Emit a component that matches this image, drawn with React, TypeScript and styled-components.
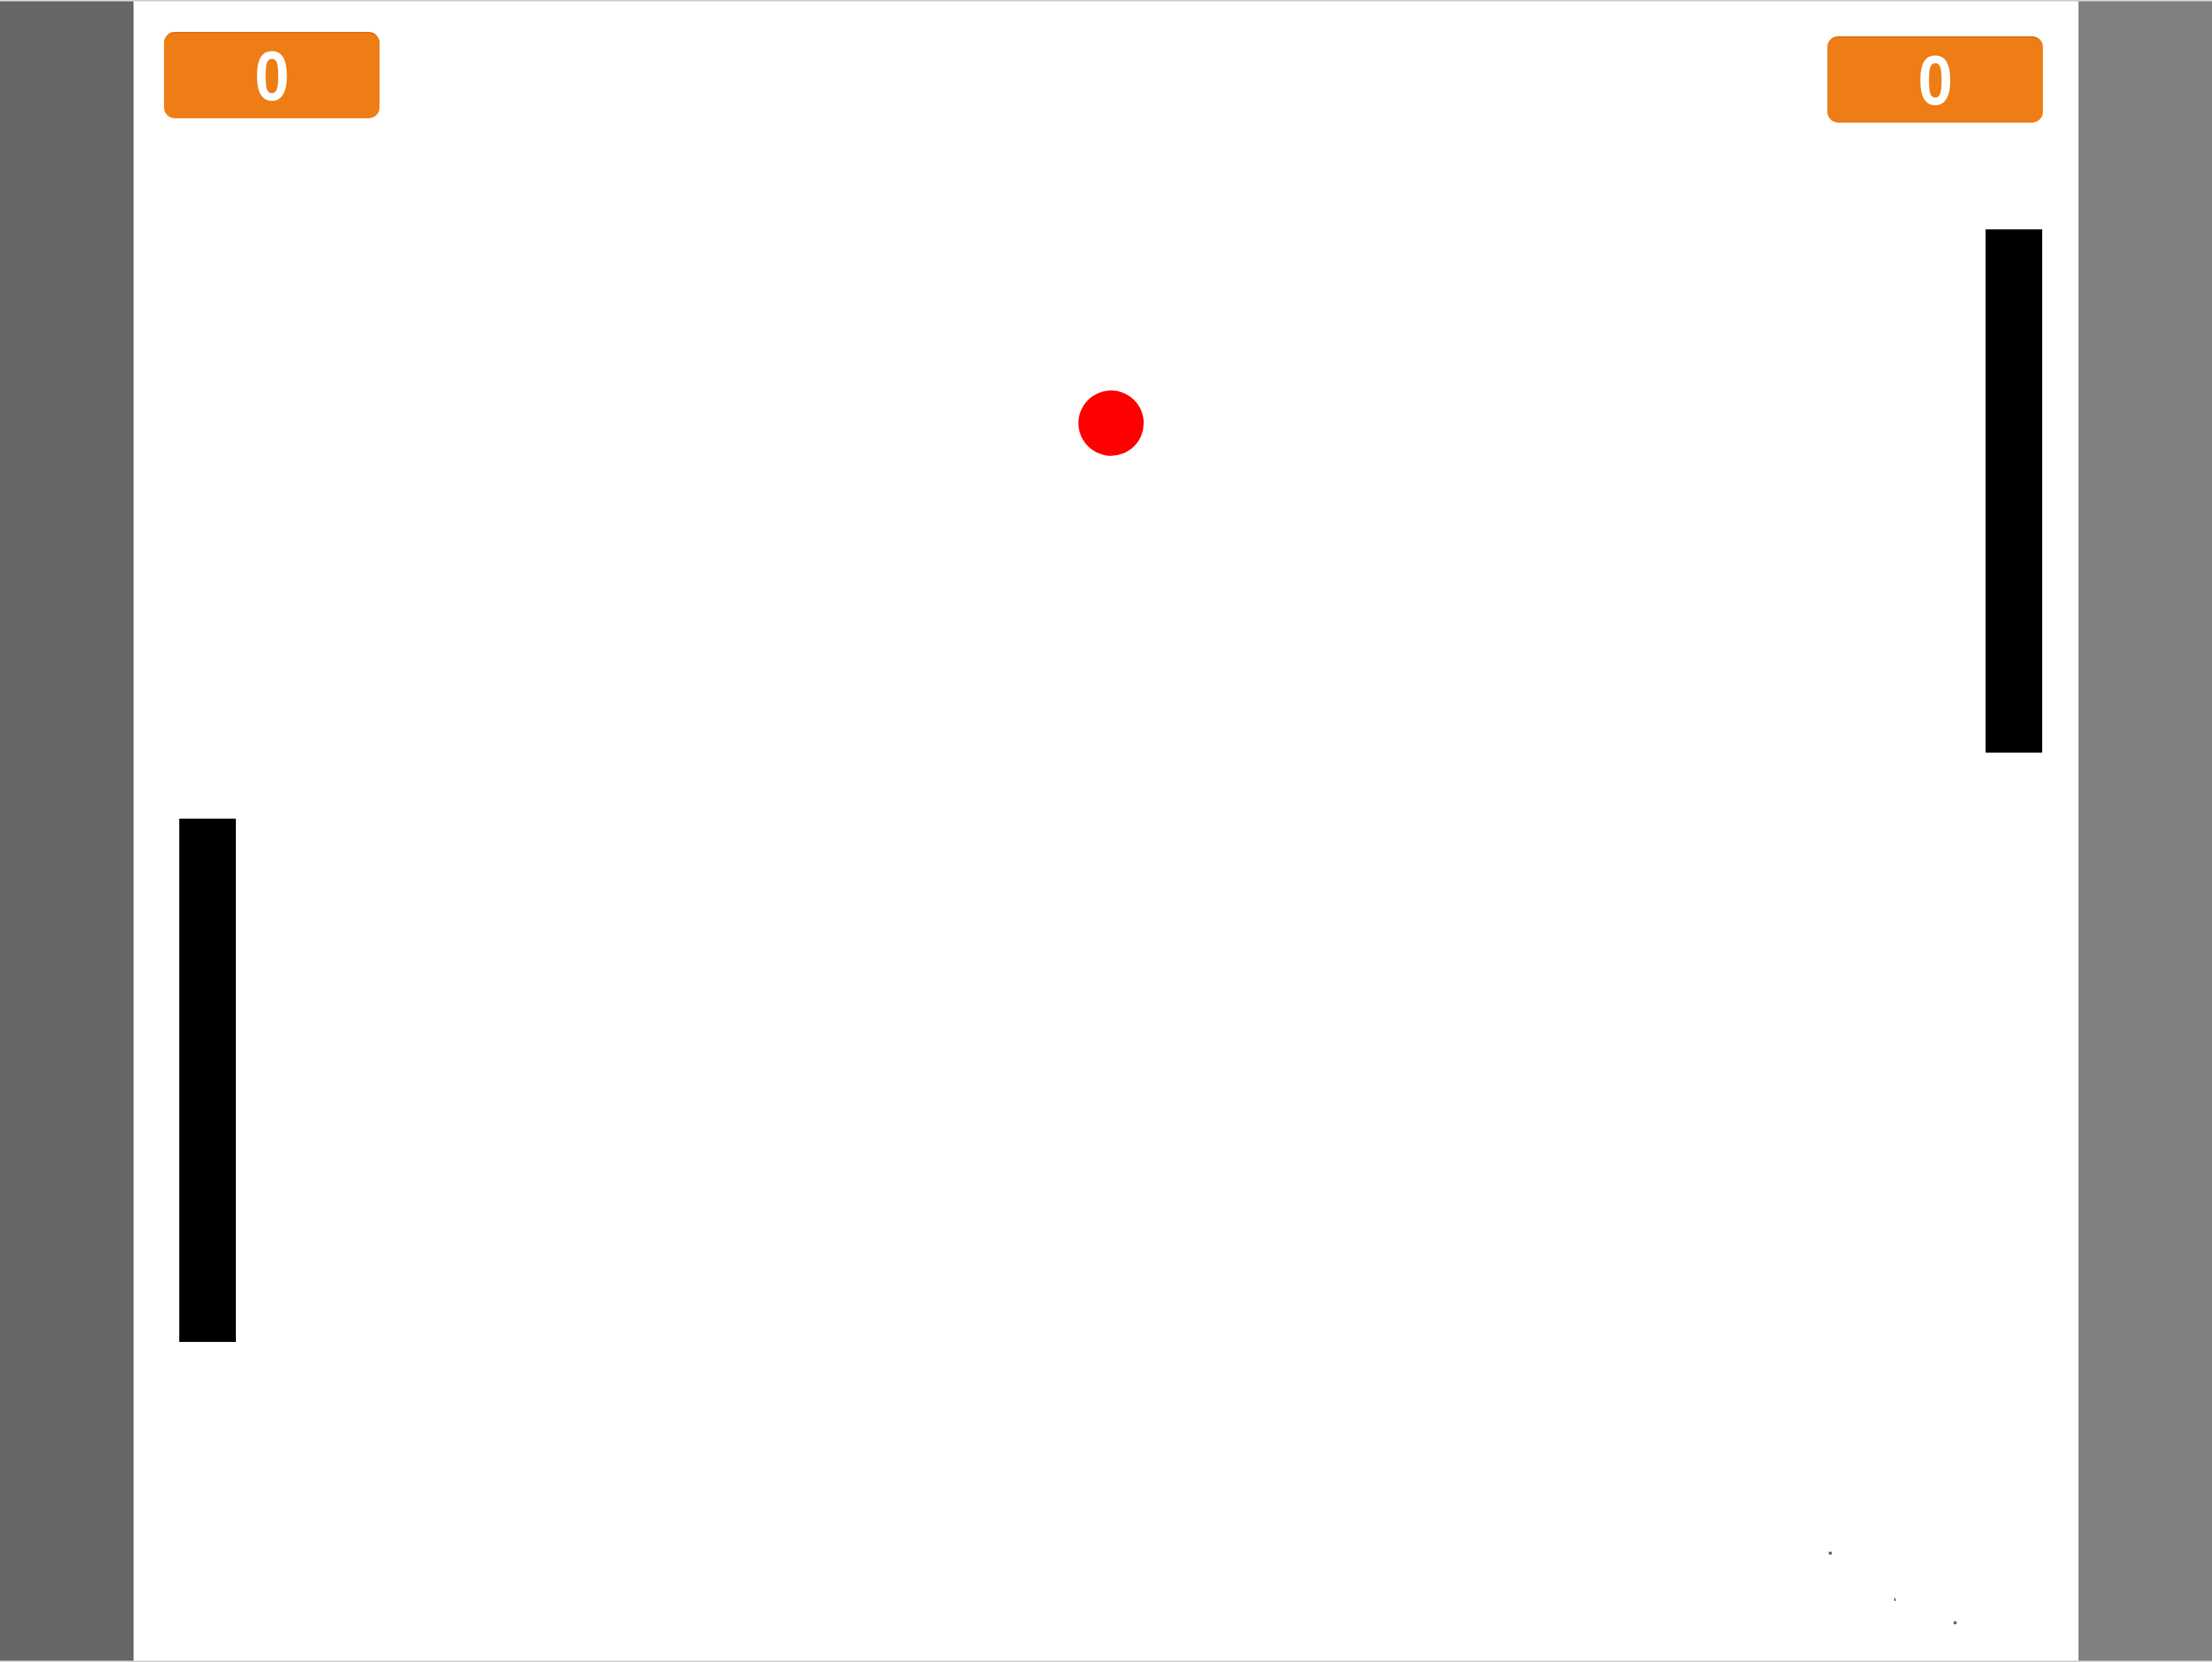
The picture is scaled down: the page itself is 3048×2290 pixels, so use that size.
import React from "react";
import styled, { createGlobalStyle } from "styled-components";

const Global = createGlobalStyle`
  html, body { margin: 0; padding: 0; background: #ffffff; }
  body { font-family: "Liberation Sans", Arial, sans-serif; }
`;

const Page = styled.div`
  width: 3048px;
  height: 2290px;
  box-sizing: border-box;
  border-top: 2px solid #d0d0d0;
  border-bottom: 2px solid #d0d0d0;
  display: flex;
  overflow: hidden;
`;

const Side = styled.div<{ $tone: string }>`
  width: 184px;
  flex: none;
  background: ${(p) => p.$tone};
`;

const Stage = styled.div`
  position: relative;
  flex: 1;
  background: #ffffff;
`;

const Score = styled.div<{ $x: number; $y: number }>`
  position: absolute;
  left: ${(p) => p.$x}px;
  top: ${(p) => p.$y}px;
  width: 297px;
  height: 119px;
  box-sizing: border-box;
  border-radius: 15px;
  background: #ee7d16;
  border-top: 2px solid #e06e0c;
  display: flex;
  align-items: center;
  justify-content: center;
  color: #ffffff;
  font-family: "Liberation Sans", Arial, sans-serif;
  font-weight: 700;
  font-size: 96px;
  line-height: 1;
`;

const Digit = styled.span`
  display: inline-block;
  transform: scaleX(0.9);
`;

const Paddle = styled.div<{ $x: number; $y: number }>`
  position: absolute;
  left: ${(p) => p.$x}px;
  top: ${(p) => p.$y}px;
  width: 78px;
  height: 721px;
  background: #000000;
`;

const Ball = styled.div`
  position: absolute;
  left: ${1486 - 184}px;
  top: ${538 - 2}px;
  width: 90px;
  height: 90px;
  border-radius: 50%;
  background: #ff0000;
`;

const Dot = styled.div<{ $x: number; $y: number; $w?: number }>`
  position: absolute;
  left: ${(p) => p.$x}px;
  top: ${(p) => p.$y}px;
  width: ${(p) => p.$w ?? 4}px;
  height: 4px;
  background: #666666;
`;

const OX = 184;
const OY = 2;

export default function App() {
  return (
    <>
      <Global />
      <Page>
        <Side $tone="#666666" />
        <Stage>
          <Score $x={226 - OX} $y={44 - OY}>
            <Digit>0</Digit>
          </Score>
          <Score $x={2518 - OX} $y={50 - OY}>
            <Digit>0</Digit>
          </Score>
          <Paddle $x={2736 - OX} $y={316 - OY} />
          <Paddle $x={247 - OX} $y={1128 - OY} />
          <Ball />
          <Dot $x={2520 - OX} $y={2138 - OY} />
          <Dot $x={2610 - OX} $y={2202 - OY} $w={2} />
          <Dot $x={2692 - OX} $y={2234 - OY} />
        </Stage>
        <Side $tone="#808080" />
      </Page>
    </>
  );
}
